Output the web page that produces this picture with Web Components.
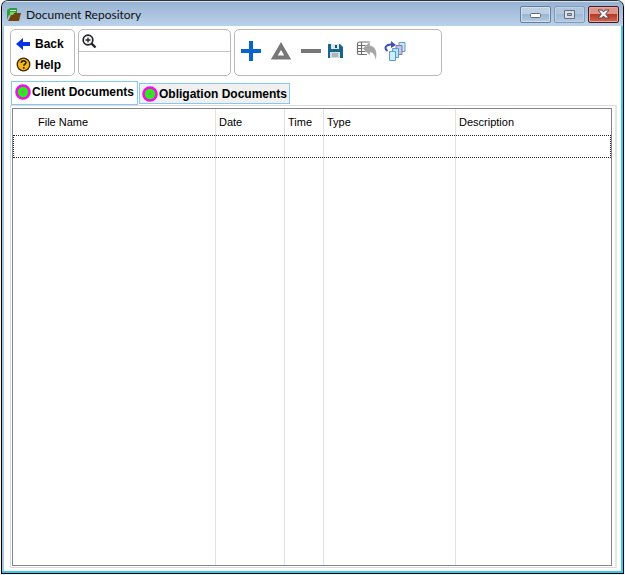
<!DOCTYPE html>
<html lang="en">
<head>
<meta charset="utf-8">
<title>Document Repository</title>
<style>
html, body { height: 100%; margin: 0; }
body { background: #fff; color: #000; font: 12px "Liberation Sans", Arial, sans-serif; }
</style>
</head>
<body>
<repo-window>
  <title-bar slot="title">Document Repository</title-bar>
  <tool-bar slot="tools"></tool-bar>
  <doc-tabs slot="tabs">
    <doc-tab selected>Client Documents</doc-tab>
    <doc-tab>Obligation Documents</doc-tab>
  </doc-tabs>
  <doc-table></doc-table>
</repo-window>
<script>
const define = (name, html) => customElements.define(name, class extends HTMLElement {
  constructor() {
    super();
    this.attachShadow({ mode: 'open' }).innerHTML = html;
  }
});

define('repo-window', `
<style>
:host { display: block; height: 100%; box-sizing: border-box; padding: 0 1px 1px; background: #f4f4f6; }
.frame { height: 100%; box-sizing: border-box; display: flex; flex-direction: column; background: #fff;
  border: 1px solid #000; border-top-color: #303238; border-radius: 7px 7px 0 0; overflow: hidden;
  box-shadow: inset -2px -2px #35c9ee, inset 2px 0 #a9c7df; }
.main { flex: 1; min-height: 0; display: flex; flex-direction: column; padding: 3px 6px 5px 8px; }
.pane { flex: 1; min-height: 0; display: flex; padding: 2px 3px 1px 1px; border: 1px solid #dcdcdc; border-right: 2px solid #e6e6e6; }
::slotted(doc-table) { flex: 1; }
</style>
<div class="frame">
  <slot name="title"></slot>
  <div class="main">
    <slot name="tools"></slot>
    <slot name="tabs"></slot>
    <div class="pane"><slot></slot></div>
  </div>
</div>`);

define('title-bar', `
<style>
:host { display: flex; align-items: center; flex: none; height: 25px; padding: 0 4px 0 5px; box-sizing: border-box;
  background: linear-gradient(#98b3d2, #bad1ea); border-top: 1px solid #d5e4f2; color: #101010; font: 12px Lato, "Open Sans", sans-serif; }
.name { flex: 1; padding: 1px 0 0 5px; }
.buttons { display: flex; gap: 3px; }
button { width: 31px; height: 17px; padding: 0; display: flex; align-items: center; justify-content: center;
  border: 1px solid #687c96; border-radius: 2px; box-shadow: inset 0 0 0 1px #d3e1ef;
  background: linear-gradient(#bccfe3 45%, #9bb6d2 50%, #b4cce4); }
.max { border-color: #859cb8; box-shadow: inset 0 0 0 1px #bdd1e6; background: linear-gradient(#b0c6df 45%, #a1bad6 50%, #b4cce4); }
.close { border-color: #4a1820; box-shadow: inset 0 0 0 1px #e4aaa0; background: linear-gradient(#dc9486 45%, #b83a25 50%, #cc6950); }
</style>
<svg width="14" height="15" viewBox="0 0 14 15"><path d="M0 13V3l3-2h7v7H2z" fill="#2f9d3a"/><path d="M3 3h6v1H3z" fill="#d9f3d5"/><path d="M3 5h5v4H3z" fill="#7ad676"/><path d="M1 14 4 8h2l1-2h7l-2 8z" fill="#70450d"/></svg>
<span class="name"><slot></slot></span>
<div class="buttons">
  <button aria-label="Minimize"><svg width="13" height="9"><rect x="1.500" y="3.500" width="10" height="4" rx="1" fill="#fff" stroke="#626a78"/></svg></button>
  <button class="max" aria-label="Maximize"><svg width="11" height="9"><path d="M.5.5h10v8H.5zM3.500 3.500v2h4v-2z" fill="#dedee5" fill-rule="evenodd" stroke="#666d80"/></svg></button>
  <button class="close" aria-label="Close"><svg width="13" height="10" viewBox="0 0 13 10"><path d="M1 1h4l1.500 2L8 1h4L8.700 5 12 9H8L6.500 7 5 9H1l3.300-4z" fill="#f3f3f5" stroke="#584450"/></svg></button>
</div>`);

define('tool-bar', `
<style>
:host { display: flex; gap: 3px; height: 47px; }
.box { box-sizing: border-box; border: 1px solid #b9b9b9; border-radius: 5px; background: #fff; }
.nav { width: 65px; display: flex; flex-direction: column; padding: 3px 5px 0; }
button { border: 0; background: none; padding: 0; color: #000; }
.nav button { display: flex; align-items: center; gap: 4px; height: 21px; font: bold 12px "Liberation Sans", Arial, sans-serif; }
.search { width: 153px; display: flex; flex-direction: column; }
label { display: flex; align-items: center; height: 22px; padding: 2px 0 0 3px; box-sizing: border-box; border-bottom: 1px solid #c4c4c4; }
input { flex: 1; min-width: 0; border: 0; padding: 0 3px; outline: 0; background: none; font: inherit; }
.search > input { margin: 0 2px; }
.actions { width: 208px; display: flex; align-items: center; padding: 0 0 4px 5px; gap: 8px; }
.actions button { width: 22px; height: 22px; display: flex; align-items: center; justify-content: center; }
.actions button:nth-child(4) { margin-left: -6px; }
.actions button:nth-child(5) { margin-left: 2px; }
.actions button:nth-child(6) { margin-left: -2px; }
</style>
<div class="box nav">
  <button><svg width="15" height="14" viewBox="0 0 15 14"><path d="M0 7l7-6v4h7v4H7v4z" fill="#0834e0"/></svg>Back</button>
  <button><svg width="15" height="15" viewBox="0 0 15 15"><circle cx="7.500" cy="7.500" r="6.300" fill="#f5b719" stroke="#342800" stroke-width="1.300"/><path d="M5.200 6c0-3 4.800-2.800 4.800-.3 0 1.500-2.200 1.400-2.200 3M7.800 10.100v1.600" fill="none" stroke="#241c00" stroke-width="1.500"/></svg>Help</button>
</div>
<div class="box search">
  <label><svg width="16" height="16" viewBox="0 0 16 16" fill="none" stroke="#202124"><circle cx="6" cy="6" r="4.800" stroke-width="1.700"/><path d="M9.500 9.500l4 4" stroke-width="2.400"/><path d="M3.500 6h5M6 3.500v5" stroke-width="1.300"/></svg><input aria-label="Search documents"></label>
  <input aria-label="Filter">
</div>
<div class="box actions">
  <button aria-label="Add"><svg width="20" height="20"><path d="M8 0h4v8h8v4h-8v8H8v-8H0V8h8z" fill="#0865cd"/></svg></button>
  <button aria-label="Change"><svg width="22" height="20" viewBox="0 0 22 20"><path d="M11 5 17.700 16.500h-13.400z" fill="none" stroke="#777" stroke-width="4"/></svg></button>
  <button aria-label="Delete"><svg width="20" height="20"><path d="M0 8h20v4H0z" fill="#777"/></svg></button>
  <button aria-label="Save"><svg width="16" height="16" viewBox="0 0 16 16"><path d="M1 1h12l3 3v11H1z" fill="#17648d"/><path d="M4 1h8v5H4z" fill="#dceaf0"/><path d="M8 2h2v3H8z" fill="#17506f"/><path d="M3 9h10v6H3z" fill="#d6dde0"/><path d="M5 11h6M5 13h6" stroke="#888f94"/></svg></button>
  <button aria-label="Import"><svg width="22" height="20" viewBox="0 0 22 20"><path d="M14 1H3Q1.500 1 1.500 3v9q0 1.500 1.500 1.500h8M2 4.500h10M2 7.500h8M2 10.500h9M5.500 1v12" fill="none" stroke="#707070" stroke-width="1.200"/><path d="M6.500 7.500 14 .5v4c6 1 8 7 5.500 15-.5-5-2-8-5.500-8v3z" fill="#a5a5a5" stroke="#fff" stroke-width=".4"/></svg></button>
  <button aria-label="Copy documents"><svg width="22" height="20" viewBox="0 0 22 20"><path d="M15 1.500h6v9h-6z" fill="#c5ebf8" stroke="#679cc5"/><path d="M12 4.500h6v9h-6z" fill="#c8c2e4" stroke="#8175b4"/><path d="M8.500 7.500h6v9h-6z" fill="#b5e4f5" stroke="#5c9ccc"/><path d="M5.500 10.500h6v9h-6z" fill="#cceffb" stroke="#5c9ccc"/><path d="M3.500 10C-.5 7 2 3 8 3.500" fill="none" stroke="#3c52b0" stroke-width="2"/><path d="M7 0l5 4-5 3z" fill="#3c52b0"/></svg></button>
</div>`);

define('doc-tabs', `
<style>
:host { display: flex; align-items: flex-end; gap: 1px; margin: 5px 0 0 1px; height: 24px; }
</style><slot></slot>`);

define('doc-tab', `
<style>
:host { display: block; }
button { display: flex; align-items: center; gap: 1px; height: 21px; padding: 0 2px; margin-bottom: 1px; border: 1px solid #84c8fa;
  background: #f0f0f0; color: #000; font: bold 12px "Liberation Sans", Arial, sans-serif; white-space: nowrap; }
:host([selected]) button { height: 24px; padding: 0 3px 3px; margin: 0; background: #fff; }
svg { flex: none; }
</style>
<button><svg width="16" height="16" viewBox="0 0 16 16"><circle cx="8" cy="8" r="6.500" fill="#1cf50c" stroke="#fa08f0" stroke-width="2.600"/><circle cx="8" cy="8" r="1.300" fill="#e050c8"/></svg><slot></slot></button>`);

define('doc-table', `
<style>
:host { display: flex; min-width: 0; border: 1px solid #82858c; background: #fff; }
table { width: 100%; height: 100%; table-layout: fixed; border-collapse: separate; border-spacing: 0; font-size: 11px; }
col.name { width: 202px; } col.date { width: 69px; } col.time { width: 39px; } col.type { width: 132px; }
th, td { padding: 0 0 0 3px; border-left: 1px solid #e2e2e2; text-align: left; font-weight: normal; }
th:first-child, td:first-child { border-left: 0; }
th:first-child { padding-left: 25px; }
th { height: 26px; }
.focus td { height: 23px; }
.focus { outline: 1px dotted #222; outline-offset: -1px; }
</style>
<table>
  <colgroup><col class="name"><col class="date"><col class="time"><col class="type"><col></colgroup>
  <thead><tr><th scope="col">File Name</th><th scope="col">Date</th><th scope="col">Time</th><th scope="col">Type</th><th scope="col">Description</th></tr></thead>
  <tbody>
    <tr class="focus"><td></td><td></td><td></td><td></td><td></td></tr>
    <tr><td></td><td></td><td></td><td></td><td></td></tr>
  </tbody>
</table>`);
</script>
</body>
</html>
